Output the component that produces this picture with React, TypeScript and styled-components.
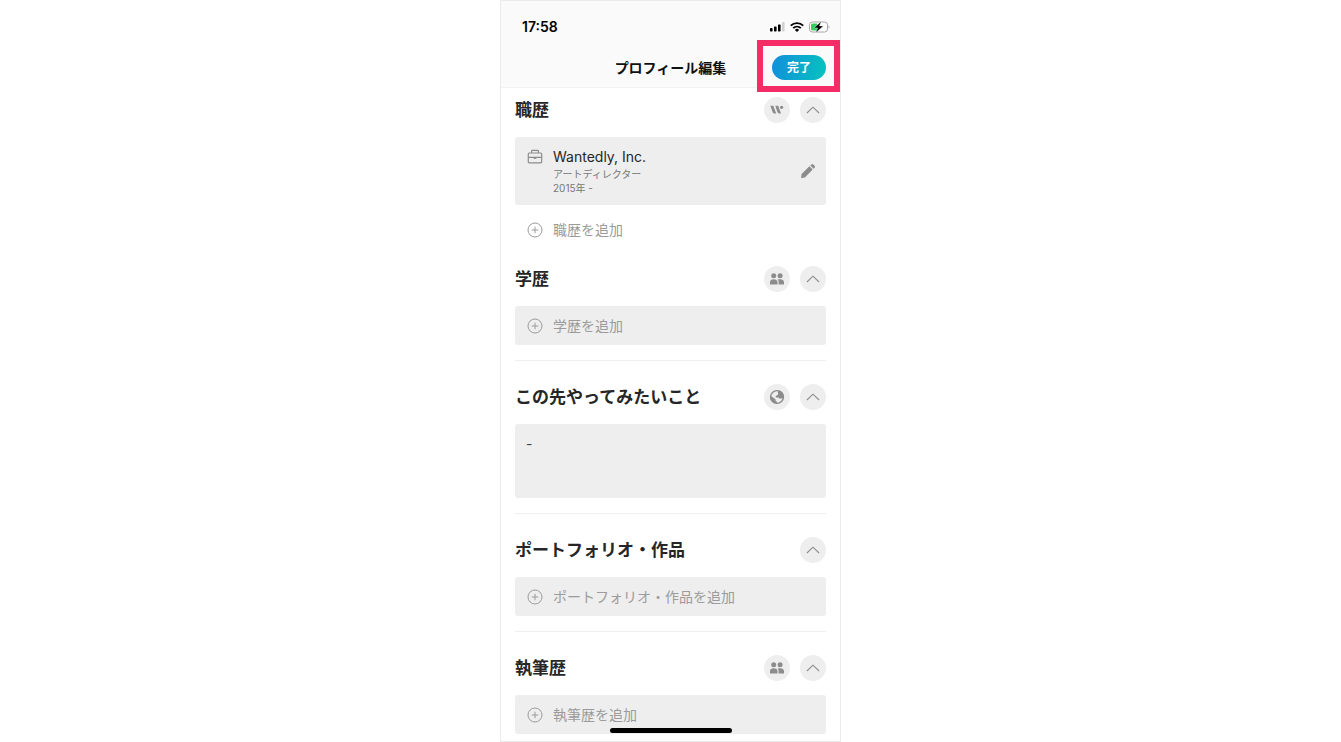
import React, { useState } from "react";
import styled, { createGlobalStyle } from "styled-components";

const GlobalStyle = createGlobalStyle`
  *, *::before, *::after { box-sizing: border-box; }
  body {
    margin: 0;
    background: #fff;
    color: #262626;
    font-family: Inter, "Noto Sans CJK JP", sans-serif;
  }
  button, textarea { font: inherit; color: inherit; }
  button { border: 0; padding: 0; background: none; cursor: pointer; }
  svg { display: block; flex: none; }
`;

const Phone = styled.main`
  position: relative;
  width: 100%;
  max-width: 341px;
  margin: 0 auto;
  padding-bottom: 7px;
  border: 1px solid #ebebeb;
  background: #fff;
`;

const TopArea = styled.header`
  background: #fafafa;
  border-bottom: 1px solid #f3f3f3;
`;

const StatusBar = styled.div`
  display: flex;
  align-items: center;
  justify-content: space-between;
  padding: 16px 10px 0 21px;
  height: 36px;
`;

const Clock = styled.time`
  font-size: 14px;
  line-height: 20px;
  font-weight: 600;
  color: #000;
`;

const StatusIcons = styled.div`
  display: flex;
  align-items: center;
  gap: 5px;
`;

const NavBar = styled.div`
  display: grid;
  grid-template-columns: 1fr auto 1fr;
  align-items: center;
  height: 50px;
  padding: 18px 14px 7px;
`;

const PageTitle = styled.h1`
  grid-column: 2;
  margin: 0;
  font-size: 14px;
  line-height: 24px;
  font-weight: 700;
  color: #111;
`;

const DoneArea = styled.div`
  position: relative;
  justify-self: end;

  &::after {
    content: "";
    position: absolute;
    inset: -15px -14px -12px -15px;
    border: 6px solid #f62c67;
    pointer-events: none;
    z-index: 1;
  }
`;

const DoneButton = styled.button`
  display: block;
  width: 54px;
  height: 25px;
  border-radius: 13px;
  background: linear-gradient(100deg, #128fdc, #06c3be);
  color: #fff;
  font-size: 12px;
  line-height: 25px;
  font-weight: 700;
`;

const Content = styled.div`
  padding: 9px 14px 0;
`;

const Section = styled.section<{ $divided?: boolean }>`
  margin-top: ${(p) => (p.$divided ? 15 : 17)}px;
  padding-top: ${(p) => (p.$divided ? 23 : 0)}px;
  border-top: ${(p) => (p.$divided ? "1px solid #efefef" : "0")};

  &:first-child { margin-top: 0; }
`;

const SectionHead = styled.div`
  display: flex;
  align-items: center;
  gap: 10px;
  height: 26px;
  margin-bottom: 14px;
`;

const SectionTitle = styled.h2`
  flex: 1;
  margin: 0;
  font-size: 17px;
  line-height: 26px;
  font-weight: 700;
`;

const RoundButton = styled.button`
  display: grid;
  place-items: center;
  width: 26px;
  height: 26px;
  border-radius: 50%;
  background: #eee;
  color: #8c8c8c;
`;

const Collapse = styled.svg<{ $open: boolean }>`
  transform: rotate(${(p) => (p.$open ? 0 : 180)}deg);
`;

const EntryCard = styled.article`
  display: flex;
  align-items: flex-start;
  gap: 10px;
  padding: 10px 10px 10px 12px;
  margin-bottom: 5px;
  border-radius: 3px;
  background: #eee;
  color: #8c8c8c;

  > svg { margin-top: 2px; }
`;

const EntryText = styled.div`
  flex: 1;
`;

const Company = styled.h3`
  margin: 0;
  font-size: 14px;
  line-height: 20px;
  font-weight: 400;
  color: #262626;
`;

const Detail = styled.p`
  margin: 0;
  font-size: 10px;
  line-height: 14px;
  color: #777;
`;

const EditButton = styled.button`
  align-self: center;
  color: #8c8c8c;
`;

const AddButton = styled.button<{ $filled?: boolean }>`
  display: flex;
  align-items: center;
  gap: 10px;
  width: 100%;
  height: 39px;
  padding: 0 12px;
  border-radius: 3px;
  background: ${(p) => (p.$filled ? "#eee" : "transparent")};
  color: #9b9b9b;
  font-size: 14px;
  line-height: 20px;
  text-align: left;
`;

const Note = styled.textarea`
  display: block;
  width: 100%;
  height: 74px;
  padding: 11px;
  border: 0;
  border-radius: 3px;
  background: #eee;
  color: #444;
  font-size: 14px;
  line-height: 18px;
  resize: none;
`;

const HomeBar = styled.div`
  position: absolute;
  bottom: 8px;
  left: 50%;
  width: 122px;
  height: 5px;
  margin-left: -61px;
  border-radius: 3px;
  background: #000;
`;

const SignalIcon = () => (
  <svg width="15" height="10" viewBox="0 0 15 10" aria-hidden="true">
    <rect x="0" y="6" width="2.6" height="3.5" rx=".7" />
    <rect x="4" y="4.4" width="2.6" height="5.1" rx=".7" />
    <rect x="8" y="2.4" width="2.6" height="7.1" rx=".7" />
    <rect x="12" y="0" width="2.6" height="9.5" rx=".7" fill="#d2d2d2" />
  </svg>
);

const WifiIcon = () => (
  <svg width="14" height="10" viewBox="0 0 14 10" fill="none" stroke="#000" strokeWidth="1.9" aria-hidden="true">
    <path d="M.8 3.6a8.9 8.9 0 0 1 12.4 0" />
    <path d="M3.2 6.1a5.5 5.5 0 0 1 7.6 0" />
    <path d="M7 10 4.9 7.9a3 3 0 0 1 4.2 0z" fill="#000" stroke="none" />
  </svg>
);

const BatteryIcon = () => (
  <svg width="21" height="12" viewBox="0 0 21 12" aria-hidden="true">
    <rect x=".5" y="1" width="18" height="10" rx="2.8" fill="#fff" stroke="#a8a8a8" />
    <path d="M3.6 2.5h4.6v7H3.6A1.6 1.6 0 0 1 2 7.9V4.1A1.6 1.6 0 0 1 3.6 2.5z" fill="#33cf5b" />
    <path d="M19.6 4.3c1.2.5 1.2 2.900 0 3.400z" fill="#a8a8a8" />
    <path d="M12.200.4 4.900 6.900h3.700L6.800 11.800l7.600-6.800h-3.900z" fill="#000" stroke="#fafafa" strokeWidth=".4" />
  </svg>
);

const WantedlyIcon = () => (
  <svg width="14" height="10" viewBox="0 0 14 10" fill="currentColor" aria-hidden="true">
    <path d="M.3.8h3l2.900 7.800H4.600C3 8.600 2.500 6.600 1.900 5z" />
    <path d="M5.300.8h2.900L11 8.600H9.400C7.800 8.600 7.200 6.600 6.600 4.800z" />
    <circle cx="11.600" cy="2.300" r="1.600" />
  </svg>
);

const PeopleIcon = () => (
  <svg width="14" height="12" viewBox="0 0 14 12" fill="currentColor" aria-hidden="true">
    <circle cx="3.700" cy="2.700" r="2.500" />
    <circle cx="10.100" cy="2.700" r="2.500" />
    <path d="M0 11.500V9.100C0 7.200 1.400 6.200 3.700 6.200s3.800 1 3.800 2.900v2.400z" />
    <path d="M8.600 11.500V8.900c0-1-.3-1.800-1-2.300.7-.3 1.600-.4 2.500-.4 2.400 0 3.900 1 3.900 2.900v2.400z" />
  </svg>
);

const GlobeIcon = () => (
  <svg width="16" height="16" viewBox="0 0 16 16" aria-hidden="true">
    <circle cx="8" cy="8" r="6.400" fill="#eee" stroke="currentColor" strokeWidth="1.400" />
    <path fill="currentColor" d="M1.200 6.600 6.500 10.300v1.300L8 13v1.800A6.900 6.900 0 0 1 1.200 6.600z" />
    <path fill="currentColor" d="M9.700 1.300A6.900 6.900 0 0 1 14.900 8.300L14.600 9.600H10.300L9.400 8.500H6.700V7L8.300 6.200l1-1.300-.6-1.300z" />
  </svg>
);

const ChevronIcon = ({ open }: { open: boolean }) => (
  <Collapse $open={open} width="14" height="8" viewBox="0 0 14 8" fill="none" stroke="currentColor" aria-hidden="true">
    <path d="M.9 7 7 1.200 13.100 7" strokeWidth="1.100" />
  </Collapse>
);

const BriefcaseIcon = () => (
  <svg width="16" height="16" viewBox="0 0 16 16" fill="none" stroke="currentColor" strokeWidth="1.200" aria-hidden="true">
    <rect x="1.300" y="4" width="13.400" height="9.800" rx="1" />
    <path d="M4.600 4V2.200c0-.5.300-.8.800-.8h5.200c.5 0 .8.300.8.800V4M1.300 8.300h13.400" />
    <path d="M6.700 8.300h2.600v1.600H6.700z" fill="currentColor" stroke="none" />
  </svg>
);

const PencilIcon = () => (
  <svg width="16" height="16" viewBox="0 0 16 16" fill="currentColor" aria-hidden="true">
    <path d="M9.400 3.300 12.700 6.600 4.900 14.400 1 15l.6-3.900z" />
    <path d="m10.300 2.400 1-1a1.400 1.400 0 0 1 2 0l1.300 1.300a1.400 1.400 0 0 1 0 2l-1 1z" />
  </svg>
);

const PlusCircleIcon = () => (
  <svg width="16" height="16" viewBox="0 0 16 16" fill="none" stroke="currentColor" aria-hidden="true">
    <circle cx="8" cy="8" r="7" />
    <path d="M8 4.700v6.600M4.700 8h6.600" />
  </svg>
);

const visibilityIcons = {
  wantedly: { icon: <WantedlyIcon />, label: "Wantedlyに公開" },
  friends: { icon: <PeopleIcon />, label: "つながりに公開" },
  everyone: { icon: <GlobeIcon />, label: "全体に公開" },
};

interface ProfileSectionProps {
  title: string;
  visibility?: keyof typeof visibilityIcons;
  divided?: boolean;
  children: React.ReactNode;
}

function ProfileSection({ title, visibility, divided, children }: ProfileSectionProps) {
  const [open, setOpen] = useState(true);
  return (
    <Section $divided={divided}>
      <SectionHead>
        <SectionTitle>{title}</SectionTitle>
        {visibility && (
          <RoundButton type="button" aria-label={visibilityIcons[visibility].label}>
            {visibilityIcons[visibility].icon}
          </RoundButton>
        )}
        <RoundButton type="button" aria-label={title} aria-expanded={open} onClick={() => setOpen(!open)}>
          <ChevronIcon open={open} />
        </RoundButton>
      </SectionHead>
      {open && children}
    </Section>
  );
}

function AddEntry({ children, filled }: { children: React.ReactNode; filled?: boolean }) {
  return (
    <AddButton type="button" $filled={filled}>
      <PlusCircleIcon />
      {children}
    </AddButton>
  );
}

export default function App() {
  return (
    <>
      <GlobalStyle />
      <Phone lang="ja">
        <TopArea>
          <StatusBar>
            <Clock>17:58</Clock>
            <StatusIcons>
              <SignalIcon />
              <WifiIcon />
              <BatteryIcon />
            </StatusIcons>
          </StatusBar>
          <NavBar>
            <PageTitle>プロフィール編集</PageTitle>
            <DoneArea>
              <DoneButton type="button">完了</DoneButton>
            </DoneArea>
          </NavBar>
        </TopArea>
        <Content>
          <ProfileSection title="職歴" visibility="wantedly">
            <EntryCard>
              <BriefcaseIcon />
              <EntryText>
                <Company>Wantedly, Inc.</Company>
                <Detail>アートディレクター</Detail>
                <Detail>2015年 -</Detail>
              </EntryText>
              <EditButton type="button" aria-label="編集">
                <PencilIcon />
              </EditButton>
            </EntryCard>
            <AddEntry>職歴を追加</AddEntry>
          </ProfileSection>
          <ProfileSection title="学歴" visibility="friends">
            <AddEntry filled>学歴を追加</AddEntry>
          </ProfileSection>
          <ProfileSection title="この先やってみたいこと" visibility="everyone" divided>
            <Note aria-label="この先やってみたいこと" defaultValue="-" />
          </ProfileSection>
          <ProfileSection title="ポートフォリオ・作品" divided>
            <AddEntry filled>ポートフォリオ・作品を追加</AddEntry>
          </ProfileSection>
          <ProfileSection title="執筆歴" visibility="friends" divided>
            <AddEntry filled>執筆歴を追加</AddEntry>
          </ProfileSection>
        </Content>
        <HomeBar />
      </Phone>
    </>
  );
}
